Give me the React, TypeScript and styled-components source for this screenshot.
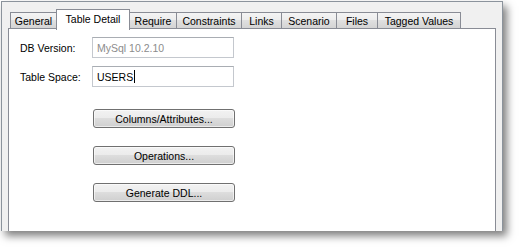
import React from 'react';
import styled, { createGlobalStyle } from 'styled-components';

const GlobalStyle = createGlobalStyle`
    html, body {
        margin: 0;
        padding: 0;
        background: #ffffff;
    }
    body {
        font-family: 'Liberation Sans', Arial, sans-serif;
        font-size: 10.5px;
        color: #000000;
    }
`;

const Page = styled.div`
    width: 520px;
    height: 247px;
    padding: 1px 0 0 1px;
    box-sizing: border-box;
    overflow: hidden;
`;

const Frame = styled.div`
    width: 502px;
    height: 230px;
    box-sizing: border-box;
    background: #f0f0f0;
    border: 1px solid #8b939c;
    border-bottom: none;
    padding: 7px 6px 0 6px;
    display: flex;
    flex-direction: column;
    box-shadow: 4px 5px 8px rgba(0, 0, 0, 0.5);
`;

const TabStrip = styled.div`
    display: flex;
    align-items: flex-end;
    height: 20px;
    padding-left: 3px;
    margin-bottom: -1px;
    position: relative;
    z-index: 1;
`;

const Tab = styled.div<{ $w: number; $active?: boolean }>`
    width: ${p => p.$w}px;
    height: ${p => (p.$active ? 21 : 17)}px;
    margin-bottom: ${p => (p.$active ? -1 : 0)}px;
    margin-left: -1px;
    box-sizing: border-box;
    border: 1px solid #898c95;
    border-bottom: ${p => (p.$active ? 'none' : '1px solid #898c95')};
    background: ${p =>
        p.$active ? '#ffffff' : 'linear-gradient(#f4f4f4 0%, #ececec 50%, #e0e0e0 50%, #d4d4d4 100%)'};
    display: flex;
    align-items: center;
    justify-content: center;
    padding-bottom: ${p => (p.$active ? 3 : 0)}px;
    white-space: nowrap;
    position: relative;
    z-index: ${p => (p.$active ? 2 : 1)};
`;

const Panel = styled.div`
    flex: 1;
    background: #ffffff;
    border: 1px solid #898c95;
    border-bottom: none;
    padding: 8px 0 0 11px;
    display: flex;
    flex-direction: column;
`;

const Form = styled.div`
    display: grid;
    grid-template-columns: 72px 142px;
    row-gap: 8px;
    align-items: center;
`;

const Label = styled.div`
    white-space: nowrap;
`;

const Field = styled.div<{ $muted?: boolean }>`
    height: 21px;
    box-sizing: border-box;
    border: 1px solid #c4c8ce;
    border-top-color: #a9adb3;
    padding: 0 4px;
    display: flex;
    align-items: center;
    color: ${p => (p.$muted ? '#8c8c8c' : '#000000')};
`;

const Caret = styled.span`
    display: inline-block;
    width: 1px;
    height: 13px;
    background: #000000;
    margin-left: 1px;
`;

const Buttons = styled.div`
    display: flex;
    flex-direction: column;
    gap: 18px;
    margin: 22px 0 0 73px;
`;

const Button = styled.div`
    width: 142px;
    height: 19px;
    box-sizing: border-box;
    border: 1px solid #707070;
    border-radius: 3px;
    background: linear-gradient(#f2f2f2 0%, #ebebeb 50%, #dddddd 50%, #cfcfcf 100%);
    box-shadow: inset 0 0 0 1px rgba(255, 255, 255, 0.6);
    display: flex;
    align-items: center;
    justify-content: center;
`;

const tabs = [
    { name: 'General', w: 47 },
    { name: 'Table Detail', w: 74, active: true },
    { name: 'Require', w: 48 },
    { name: 'Constraints', w: 66 },
    { name: 'Links', w: 41 },
    { name: 'Scenario', w: 56 },
    { name: 'Files', w: 42 },
    { name: 'Tagged Values', w: 84 },
];

const App: React.FC = () => (
    <Page>
        <GlobalStyle />
        <Frame>
            <TabStrip>
                {tabs.map(t => (
                    <Tab key={t.name} $w={t.w} $active={t.active}>
                        {t.name}
                    </Tab>
                ))}
            </TabStrip>
            <Panel>
                <Form>
                    <Label>DB Version:</Label>
                    <Field $muted>MySql 10.2.10</Field>
                    <Label>Table Space:</Label>
                    <Field>
                        USERS
                        <Caret />
                    </Field>
                </Form>
                <Buttons>
                    <Button>Columns/Attributes...</Button>
                    <Button>Operations...</Button>
                    <Button>Generate DDL...</Button>
                </Buttons>
            </Panel>
        </Frame>
    </Page>
);

export default App;
